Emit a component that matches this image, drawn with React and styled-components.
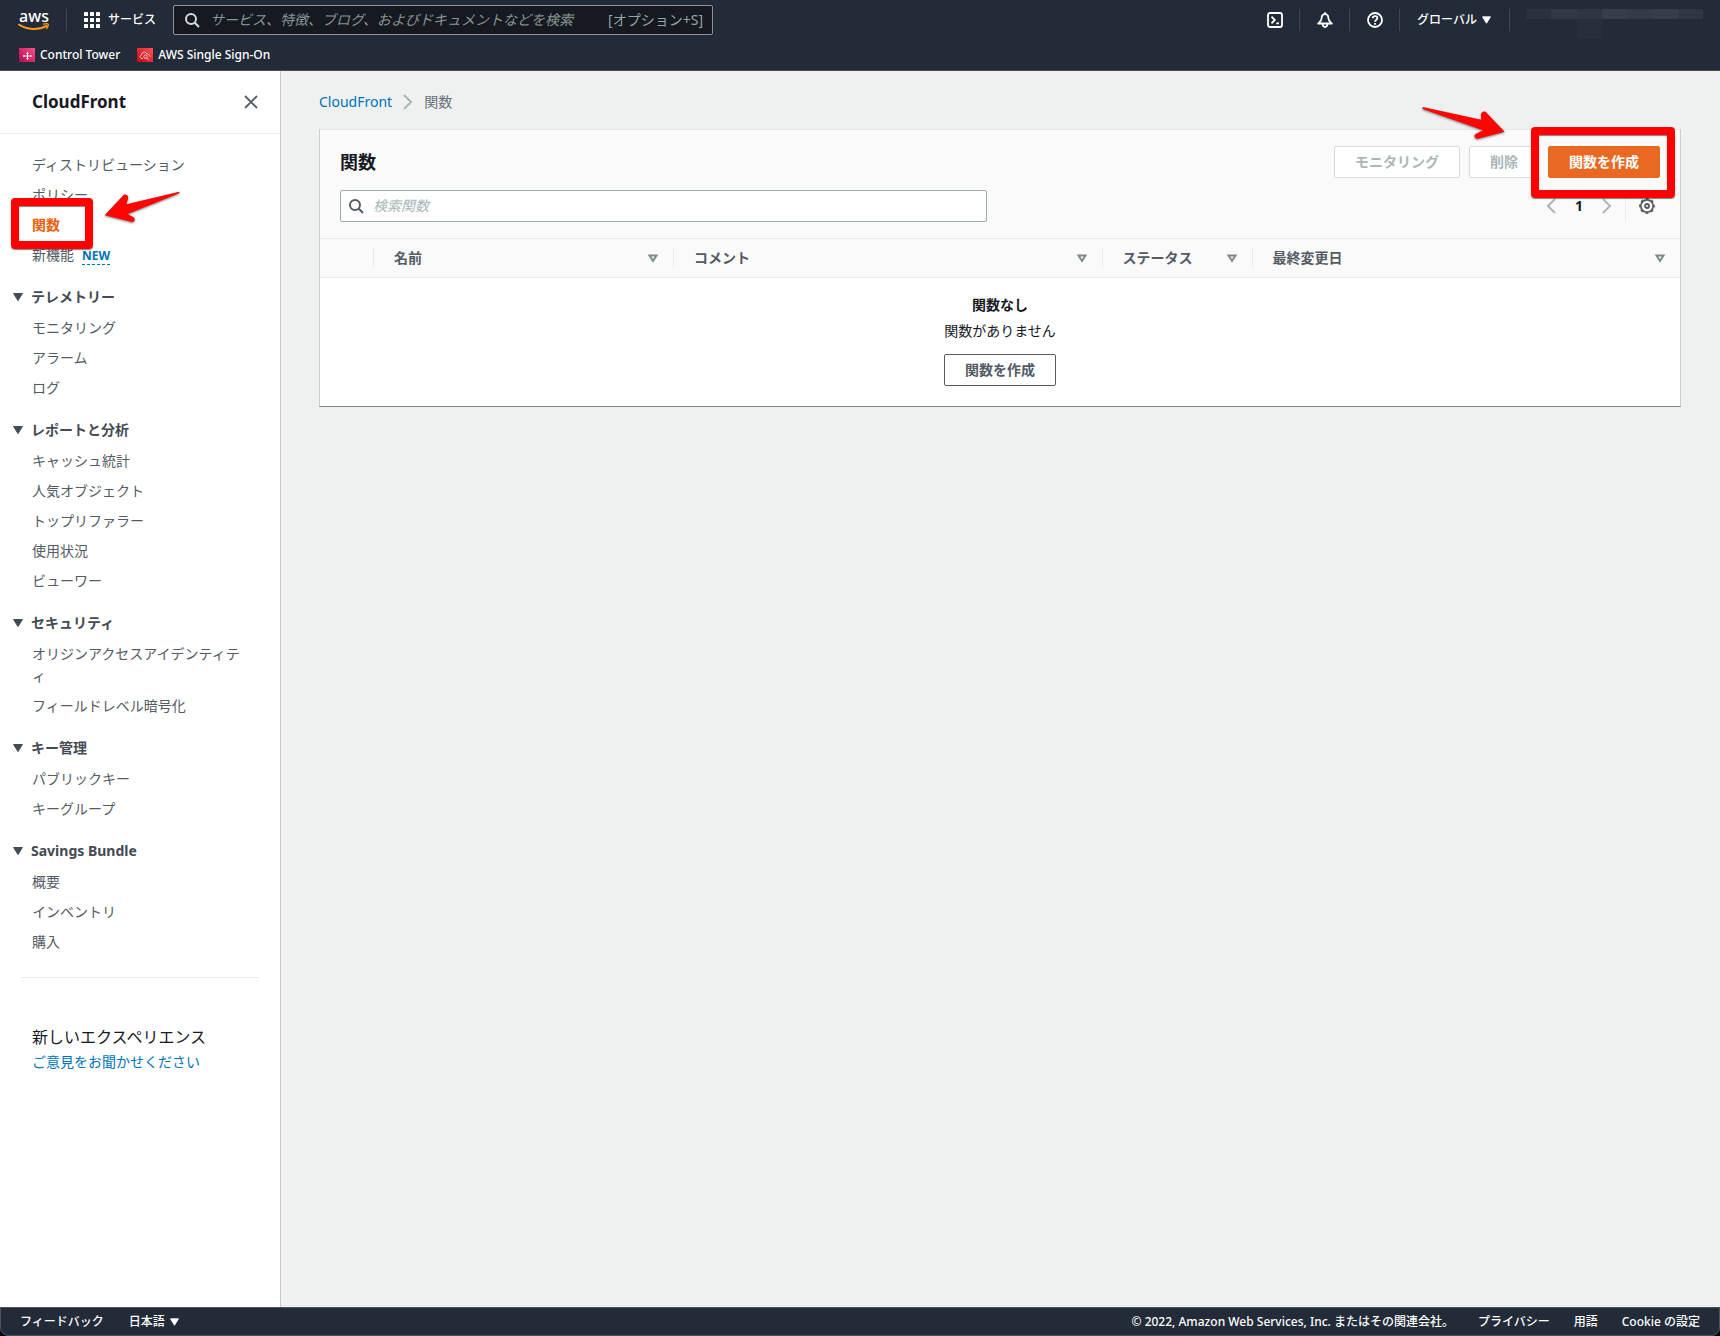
import React from 'react';
import styled, { createGlobalStyle, css } from 'styled-components';

const sections = [
  { title: 'テレメトリー', items: ['モニタリング', 'アラーム', 'ログ'] },
  {
    title: 'レポートと分析',
    items: ['キャッシュ統計', '人気オブジェクト', 'トップリファラー', '使用状況', 'ビューワー'],
  },
  { title: 'セキュリティ', items: ['オリジンアクセスアイデンティティ', 'フィールドレベル暗号化'] },
  { title: 'キー管理', items: ['パブリックキー', 'キーグループ'] },
  { title: 'Savings Bundle', items: ['概要', 'インベントリ', '購入'] },
];

const columns = [
  { name: '名前', width: '300px' },
  { name: 'コメント' },
  { name: 'ステータス', width: '150px' },
  { name: '最終変更日' },
];

const maskedUser = ['#29323e', '#313945', '#2e3642', '#363e4a', '#333b47', '#363e4a', '#2f3743'];

const SearchIcon = ({ size = 16 }) => (
  <svg width={size} height={size} viewBox="0 0 16 16" fill="none" stroke="currentColor" strokeWidth="2" aria-hidden="true">
    <circle cx="7" cy="7" r="5" />
    <path d="M10.8 10.8 15 15" />
  </svg>
);

const Caret = ({ width = 10, height = 8 }) => (
  <svg width={width} height={height} viewBox="0 0 10 8" aria-hidden="true">
    <path d="M.6.5h8.8L5 7.6z" fill="currentColor" stroke="currentColor" strokeLinejoin="round" />
  </svg>
);

const Chevron = ({ left }) => (
  <svg width="10" height="16" viewBox="0 0 10 16" fill="none" stroke="#aab7b8" strokeWidth="2" aria-hidden="true">
    <path d={left ? 'M9 1 2 8l7 7' : 'm1 1 7 7-7 7'} />
  </svg>
);

const AwsLogo = () => (
  <svg width="34" height="36" viewBox="0 0 34 36" aria-hidden="true">
    <text x="16" y="20" textAnchor="middle" fontFamily="Noto Sans, sans-serif" fontSize="16" fontWeight="500" fill="#fff">aws</text>
    <path d="M1 22.700c8.300 5.300 19.500 5.800 27.500 1.200" fill="none" stroke="#f7981f" strokeWidth="2" strokeLinecap="round" />
    <path d="M25.500 22.200c1.700-.5 4-.7 4.600-.1.500.6-.2 3-1.500 4.400" fill="none" stroke="#f7981f" strokeWidth="1.300" strokeLinecap="round" />
  </svg>
);

const GridIcon = () => (
  <svg width="16" height="16" viewBox="0 0 16 16" fill="currentColor" aria-hidden="true">
    {[0, 6, 12].map(y => [0, 6, 12].map(x => <rect key={`${x}${y}`} x={x} y={y} width="4" height="4" rx=".5" />))}
  </svg>
);

const ShellIcon = () => (
  <svg width="16" height="16" viewBox="0 0 16 16" fill="none" stroke="currentColor" strokeWidth="1.800" aria-hidden="true">
    <rect x="1" y="1" width="14" height="14" rx="2" />
    <path d="m4.500 4.700 3.300 3.300-3.300 3.300M9.300 11.300H12" />
  </svg>
);

const BellIcon = () => (
  <svg width="16" height="16" viewBox="0 0 16 16" fill="none" stroke="currentColor" strokeWidth="1.800" strokeLinejoin="round" aria-hidden="true">
    <path d="M8 2.200c-2.300 0-3.300 1.600-3.300 3.500 0 2.900-2 4.300-3.500 5.800h13.600c-1.500-1.500-3.500-2.900-3.500-5.800 0-1.900-1-3.500-3.300-3.500zM8 .3v2" />
    <path d="M5.500 12c.2 1.900 1.200 3 2.500 3s2.300-1.100 2.500-3" />
  </svg>
);

const HelpIcon = () => (
  <svg width="16" height="16" viewBox="0 0 16 16" fill="none" stroke="currentColor" strokeWidth="1.800" aria-hidden="true">
    <circle cx="8" cy="8" r="7" />
    <path d="M5.700 6.300c0-3 4.700-2.900 4.700-.2C10.400 7.700 8 7.700 8 9.700M8 11v1.700" />
  </svg>
);

const ControlTowerIcon = () => (
  <svg width="16" height="14" viewBox="0 0 16 14" aria-hidden="true">
    <defs>
      <linearGradient id="tower" x1="0" y1="1" x2="1" y2="0">
        <stop stopColor="#b0084d" />
        <stop offset="1" stopColor="#ff4f8b" />
      </linearGradient>
    </defs>
    <path fill="url(#tower)" d="M0 0h16v14H0z" />
    <path d="M8.500 4.500v7M5 8h7.500M7.500 5.500l1-1 1 1M7.500 10.500l1 1 1-1M11.500 7l1 1-1 1" fill="none" stroke="#fff" strokeWidth=".9" />
    <circle cx="5" cy="8" r=".9" fill="#fff" />
  </svg>
);

const SsoIcon = () => (
  <svg width="16" height="14" viewBox="0 0 16 14" aria-hidden="true">
    <defs>
      <linearGradient id="sso" x1="0" y1="1" x2="1" y2="0">
        <stop stopColor="#bd0816" />
        <stop offset="1" stopColor="#ff5252" />
      </linearGradient>
    </defs>
    <path fill="url(#sso)" d="M0 0h16v14H0z" />
    <g fill="none" stroke="#fff" strokeWidth=".7">
      <path d="M6 10.500H5c-1.300 0-2-.8-2-1.800 0-.9.600-1.500 1.500-1.700 0-3 4.200-4 5.300-1.100 1-.5 1.700.1 1.800 1.100 1.200.2 1.500 1 1.500 1.700" />
      <circle cx="8.500" cy="8.700" r="1.700" />
      <path d="m9.700 10 2 2.200" />
    </g>
  </svg>
);

const GearIcon = () => (
  <svg width="16" height="16" viewBox="0 0 16 16" fill="none" stroke="currentColor" aria-hidden="true">
    <circle cx="8" cy="8" r="6.200" strokeWidth="1.700" />
    <circle cx="8" cy="8" r="7.300" strokeWidth="1.200" strokeDasharray="2.900 2.833" strokeDashoffset="1.450" />
    <circle cx="8" cy="8" r="2" strokeWidth="1.800" />
  </svg>
);

const App = () => (
  <Page>
    <GlobalStyle />
    <Header>
      <TopBar>
        <Logo href="#" aria-label="AWS"><AwsLogo /></Logo>
        <Divider />
        <Services type="button"><GridIcon />サービス</Services>
        <GlobalSearch>
          <SearchIcon />
          <input type="search" aria-label="検索" placeholder="サービス、特徴、ブログ、およびドキュメントなどを検索" />
          <kbd>[オプション+S]</kbd>
        </GlobalSearch>
        <Tools>
          <ToolButton type="button" aria-label="CloudShell"><ShellIcon /></ToolButton>
          <Divider />
          <ToolButton type="button" aria-label="通知"><BellIcon /></ToolButton>
          <Divider />
          <ToolButton type="button" aria-label="ヘルプ"><HelpIcon /></ToolButton>
          <Divider />
          <Region type="button">グローバル<Caret width={9} height={8} /></Region>
          <Divider />
          <User>
            {maskedUser.map((color, i) => <Block key={i} $color={color} $tall={i === 2} />)}
          </User>
        </Tools>
      </TopBar>
      <Favorites>
        <a href="#"><ControlTowerIcon />Control Tower</a>
        <a href="#"><SsoIcon />AWS Single Sign-On</a>
      </Favorites>
    </Header>

    <Body>
      <Sidebar>
        <SidebarHead>
          <h2>CloudFront</h2>
          <IconButton type="button" aria-label="閉じる">
            <svg width="14" height="14" viewBox="0 0 14 14" stroke="currentColor" strokeWidth="1.800">
              <path d="m1 1 12 12M13 1 1 13" />
            </svg>
          </IconButton>
        </SidebarHead>
        <Nav>
          <NavList>
            <li><NavLink href="#">ディストリビューション</NavLink></li>
            <li><NavLink href="#">ポリシー</NavLink></li>
            <Marked>
              <NavLink href="#" $active>関数</NavLink>
              <NavFrame />
              <NavArrow width="80" height="35" viewBox="305 145 240 105" aria-hidden="true">
                <path d="M537 153 378 191l5-17c3-12-11-16-16-8l-54 58 82 20c9 0 11-12 3-15l-16-9 155-62z" />
              </NavArrow>
            </Marked>
            <li><NavLink href="#">新機能</NavLink><New href="#">NEW</New></li>
          </NavList>
          {sections.map(section => (
            <section key={section.title}>
              <SectionTitle type="button"><Caret />{section.title}</SectionTitle>
              <NavList>
                {section.items.map(item => <li key={item}><NavLink href="#">{item}</NavLink></li>)}
              </NavList>
            </section>
          ))}
          <Rule />
          <Feedback>
            <p>新しいエクスペリエンス</p>
            <a href="#">ご意見をお聞かせください</a>
          </Feedback>
        </Nav>
      </Sidebar>

      <Main>
        <Breadcrumb aria-label="パンくず">
          <a href="#">CloudFront</a>
          <Chevron />
          <span>関数</span>
        </Breadcrumb>
        <Card>
          <CardHead>
            <Row>
              <h1>関数</h1>
              <Actions>
                <Button type="button" disabled>モニタリング</Button>
                <Button type="button" disabled>削除</Button>
                <CreateWrap>
                  <Button type="button" $primary>関数を作成</Button>
                  <CreateFrame />
                  <CreateArrow width="85" height="35" viewBox="361 44 255 105" aria-hidden="true">
                    <path d="m366 50 176 38-1-15c2-12 14-11 18-4l53 55-80 21c-11 2-14-11-6-15l21-10-181-64z" />
                  </CreateArrow>
                </CreateWrap>
              </Actions>
            </Row>
            <Row>
              <TableSearch>
                <SearchIcon />
                <input type="search" aria-label="検索関数" placeholder="検索関数" />
              </TableSearch>
              <Pager>
                <IconButton type="button" aria-label="前へ"><Chevron left /></IconButton>
                <b>1</b>
                <IconButton type="button" aria-label="次へ"><Chevron /></IconButton>
                <Settings>
                  <IconButton type="button" aria-label="設定"><GearIcon /></IconButton>
                </Settings>
              </Pager>
            </Row>
          </CardHead>
          <Table>
            <colgroup>
              <Col $width="53px" />
              {columns.map(c => <Col key={c.name} $width={c.width} />)}
            </colgroup>
            <thead>
              <tr>
                <th />
                {columns.map(c => (
                  <th key={c.name} scope="col">
                    <Sort type="button">
                      {c.name}
                      <svg width="10" height="9" viewBox="0 0 10 9" aria-hidden="true">
                        <path d="M1.500 1.500h7L5 7z" fill="none" stroke="#7c8b8a" strokeWidth="2" />
                      </svg>
                    </Sort>
                  </th>
                ))}
              </tr>
            </thead>
            <tbody>
              <tr>
                <td colSpan={5}>
                  <Empty>
                    <b>関数なし</b>
                    <p>関数がありません</p>
                    <Button type="button">関数を作成</Button>
                  </Empty>
                </td>
              </tr>
            </tbody>
          </Table>
        </Card>
      </Main>
    </Body>

    <Footer>
      <a href="#">フィードバック</a>
      <FooterButton type="button">日本語<Caret width={9} height={8} /></FooterButton>
      <Legal>
        <span>© 2022, Amazon Web Services, Inc. またはその関連会社。</span>
        <a href="#">プライバシー</a>
        <a href="#">用語</a>
        <a href="#">Cookie の設定</a>
      </Legal>
    </Footer>
  </Page>
);

export default App;

const GlobalStyle = createGlobalStyle`
  * {
    box-sizing: border-box;
  }

  body {
    margin: 0;
    background: #000;
    color: #16191f;
    font: 14px/22px 'Noto Sans', 'Noto Sans CJK JP', sans-serif;
  }

  button, input, kbd {
    font: inherit;
  }

  button {
    padding: 0;
    border: 0;
    background: none;
    color: inherit;
    white-space: nowrap;
  }

  a {
    color: #0073bb;
    text-decoration: none;
  }

  h1, h2, p, ul {
    margin: 0;
    padding: 0;
  }

  svg {
    display: block;
    flex: none;
  }
`

const Page = styled.div`
  display: flex;
  flex-direction: column;
  min-height: 100vh;
`

const Header = styled.header`
  height: 71px;
  background: #222b37;
  border-bottom: 1px solid #4b4b59;
  color: #fff;
  font-size: 12px;
`

const TopBar = styled.div`
  display: flex;
  align-items: center;
  height: 40px;
  padding: 0 17px 0 18px;
`

const Logo = styled.a`
  width: 48px;
`

const Divider = styled.span`
  width: 1px;
  height: 22px;
  background: #3d4651;
`

const Services = styled.button`
  display: flex;
  align-items: center;
  gap: 8px;
  margin: 0 17px;
  font-weight: 500;
`

const GlobalSearch = styled.label`
  display: flex;
  align-items: center;
  gap: 10px;
  width: 540px;
  height: 30px;
  padding: 0 9px 0 10px;
  border: 1px solid #879596;
  border-radius: 2px;
  background: #16191f;
  font-size: 14px;
  color: #d5dbdb;

  input {
    flex: 1;
    min-width: 0;
    padding: 0;
    border: 0;
    outline: 0;
    background: none;
    color: #fff;
  }

  input::placeholder {
    color: #879596;
    font-style: italic;
  }

  kbd {
    color: #95a5a6;
  }
`

const Tools = styled.div`
  display: flex;
  align-items: center;
  margin-left: auto;
`

const ToolButton = styled.button`
  display: flex;
  justify-content: center;
  width: 49px;
`

const Region = styled.button`
  display: flex;
  align-items: center;
  gap: 5px;
  padding: 0 18px 0 17px;
  font-weight: 500;
`

const User = styled.div`
  display: flex;
  width: 193px;
  height: 22px;
  padding-left: 16px;
`

const Block = styled.span`
  flex: 1;
  height: 10px;
  background: ${props => props.$color};
  box-shadow: ${props => (props.$tall ? '0 20px #262f3b, 0 10px #262f3b' : 'none')};
`

const Favorites = styled.nav`
  display: flex;
  align-items: center;
  gap: 17px;
  height: 30px;
  padding: 0 19px;

  a {
    display: flex;
    align-items: center;
    gap: 5px;
    color: #fff;
    font-weight: 500;
  }
`

const Body = styled.div`
  display: flex;
  flex: 1;
`

const Sidebar = styled.aside`
  flex: none;
  width: 281px;
  border-right: 1px solid #c5cacb;
  background: #fff;
`

const SidebarHead = styled.div`
  display: flex;
  align-items: center;
  justify-content: space-between;
  height: 63px;
  padding: 0 22px 0 32px;
  border-bottom: 1px solid #eaeded;

  h2 {
    font-size: 17px;
  }
`

const IconButton = styled.button`
  display: flex;
  color: #545b64;
`

const Nav = styled.nav`
  padding: 20px 0;
`

const NavList = styled.ul`
  display: flex;
  flex-direction: column;
  gap: 8px;
  padding: 0 32px;
  list-style: none;
`

const NavLink = styled.a`
  color: ${props => (props.$active ? '#eb5f07' : '#545b64')};
  font-weight: ${props => (props.$active ? 700 : 400)};
  line-break: loose;
`

const New = styled.a`
  display: inline-block;
  margin-left: 8px;
  border-bottom: 1px dashed #0073bb;
  font-size: 12px;
  font-weight: 700;
  line-height: 16px;
`

const SectionTitle = styled.button`
  display: flex;
  align-items: center;
  gap: 8px;
  margin: 20px 0 9px 13px;
  color: #434b54;
  font-weight: 700;
`

const Rule = styled.hr`
  margin: 24px 20px 48px;
  border: 0;
  border-top: 1px solid #eaeded;
`

const Feedback = styled.div`
  padding: 0 32px;

  p {
    margin-bottom: 3px;
    font-size: 16px;
  }
`

// red callouts sit on top of the control they point at
const frame = css`
  position: absolute;
  border: 8px solid #f00;
  border-radius: 4px;
  box-shadow: 0 1px 1px rgba(0, 0, 0, .5), inset 0 1px 1px rgba(0, 0, 0, .5);
  pointer-events: none;
`

const arrow = css`
  position: absolute;
  fill: #fb0505;
  filter: drop-shadow(0 1px 1px rgba(0, 0, 0, .5));
  pointer-events: none;
`

const Marked = styled.li`
  position: relative;
`

const NavFrame = styled.span`
  ${frame}
  top: -16px;
  left: -21px;
  width: 82px;
  height: 51px;
`

const NavArrow = styled.svg`
  ${arrow}
  top: -25px;
  left: 70px;
`

const CreateWrap = styled.div`
  position: relative;
`

const CreateFrame = styled.span`
  ${frame}
  top: -19px;
  right: -15px;
  width: 144px;
  height: 71px;
`

const CreateArrow = styled.svg`
  ${arrow}
  top: -41px;
  right: 154px;
`

const Main = styled.main`
  flex: 1;
  min-width: 0;
  padding: 20px 39px 20px 38px;
  background: #eff1f1;
`

const Breadcrumb = styled.nav`
  display: flex;
  align-items: center;
  gap: 11px;
  margin-bottom: 16px;
  color: #687078;
`

const Card = styled.section`
  border: 1px solid #c8cdce;
  border-top-color: #e4e7e7;
  border-bottom-color: #7b898d;
  background: #fff;
`

const CardHead = styled.div`
  display: flex;
  flex-direction: column;
  gap: 12px;
  padding: 16px 20px;
  background: #fafafa;

  h1 {
    font-size: 18px;
  }
`

const Row = styled.div`
  display: flex;
  align-items: center;
  justify-content: space-between;
`

const Actions = styled.div`
  display: flex;
  gap: 9px;
`

const Button = styled.button`
  height: 32px;
  padding: 0 20px;
  border: 1px solid #545b64;
  border-radius: 2px;
  background: #fff;
  color: #545b64;
  font-weight: 700;

  &:disabled {
    border-color: #d5dbdb;
    color: #aab7b8;
  }

  ${props => props.$primary && css`
    border-color: #ea6922;
    background: #ea6922;
    color: #fff;
  `}
`

const TableSearch = styled.label`
  display: flex;
  align-items: center;
  gap: 9px;
  width: 49%;
  max-width: 648px;
  height: 32px;
  padding: 0 7px;
  border: 1px solid #9babad;
  border-radius: 2px;
  background: #fff;
  color: #545b64;

  input {
    flex: 1;
    min-width: 0;
    padding: 0;
    border: 0;
    outline: 0;
    background: none;
  }

  input::placeholder {
    color: #aab7b8;
    font-style: italic;
  }
`

const Pager = styled.div`
  display: flex;
  align-items: center;
  gap: 19px;
`

const Settings = styled.div`
  display: flex;
  align-items: center;
  height: 32px;
  margin-left: -6px;
  padding: 0 5px 0 13px;
  border-left: 1px solid #eaeded;
`

const Table = styled.table`
  width: 100%;
  border-collapse: collapse;
  table-layout: fixed;

  th {
    height: 39px;
    padding: 0;
    border: 1px solid #eaeded;
    border-width: 1px 0;
    background: #fafafa;
  }

  td {
    padding: 16px 20px 20px;
  }
`

const Col = styled.col`
  width: ${props => props.$width || 'auto'};
`

const Sort = styled.button`
  display: flex;
  align-items: center;
  justify-content: space-between;
  width: 100%;
  height: 20px;
  padding: 0 15px 0 20px;
  border-left: 1px solid #eaeded;
  color: #545b64;
  font-weight: 700;
`

const Empty = styled.div`
  display: flex;
  flex-direction: column;
  align-items: center;

  p {
    margin: 4px 0 12px;
  }
`

const Footer = styled.footer`
  display: flex;
  align-items: center;
  gap: 25px;
  height: 29px;
  padding: 0 19px;
  border: 1px solid #4b535f;
  border-radius: 0 0 8px 8px;
  background: #222b37;
  color: #fff;
  font-size: 12px;
  font-weight: 500;

  a {
    color: #fff;
  }
`

const FooterButton = styled.button`
  display: flex;
  align-items: center;
  gap: 5px;
`

const Legal = styled.div`
  display: flex;
  gap: 24px;
  margin-left: auto;
`
